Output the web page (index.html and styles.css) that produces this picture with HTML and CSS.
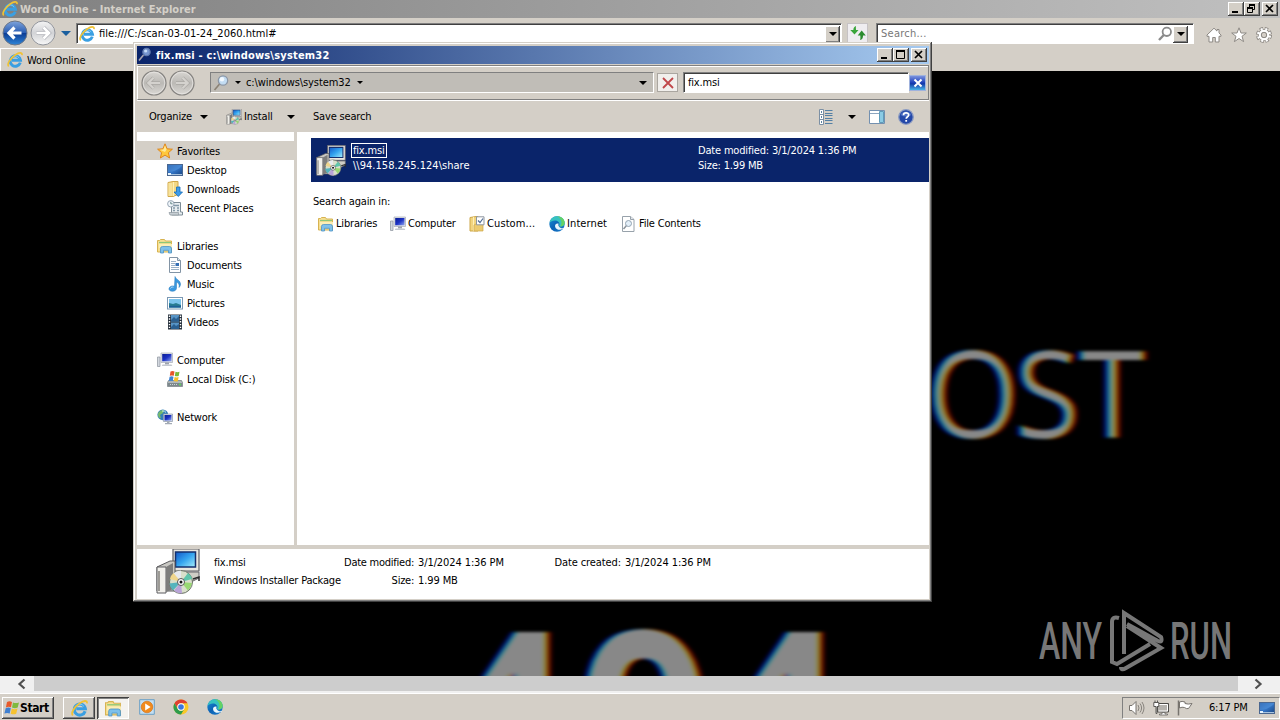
FILE: index.html
```html
<!DOCTYPE html>
<html lang="en">
<head>
	<meta charset="utf-8">
	<title>Word Online</title>
	<link rel="stylesheet" href="styles.css">
</head>
<body>
	<svg class="sprites" width="0" height="0">
		<defs>
			<linearGradient id="blue" x1="0" y1="0" x2="0" y2="1">
				<stop offset="0" stop-color="#7fa4dc"/><stop offset=".48" stop-color="#2c5fb4"/>
				<stop offset=".5" stop-color="#0b3a92"/><stop offset="1" stop-color="#2f86d8"/>
			</linearGradient>
			<linearGradient id="pale" x1="0" y1="0" x2="0" y2="1">
				<stop offset="0" stop-color="#f4f4f4"/><stop offset=".5" stop-color="#d2d3d6"/><stop offset="1" stop-color="#f8f8f8"/>
			</linearGradient>
			<linearGradient id="gray" x1="0" y1="0" x2="0" y2="1">
				<stop offset="0" stop-color="#d8d6d2"/><stop offset=".5" stop-color="#bbb9b5"/><stop offset="1" stop-color="#dad8d4"/>
			</linearGradient>
			<linearGradient id="screen" x1="0" y1="0" x2="1" y2="1">
				<stop offset="0" stop-color="#1257c8"/><stop offset=".5" stop-color="#35a5ef"/><stop offset="1" stop-color="#a8f0fb"/>
			</linearGradient>
			<linearGradient id="dark" x1="0" y1="0" x2="1" y2="1">
				<stop offset="0" stop-color="#0a1d92"/><stop offset=".5" stop-color="#1c32c4"/><stop offset="1" stop-color="#8fa5ee"/>
			</linearGradient>
			<linearGradient id="edge" x1="0" y1="0" x2="1" y2="1">
				<stop offset="0" stop-color="#1a8fd8"/><stop offset=".5" stop-color="#0c62b4"/><stop offset="1" stop-color="#1b7fd0"/>
			</linearGradient>
			<linearGradient id="desk" x1="0" y1="0" x2="1" y2="1">
				<stop offset="0" stop-color="#1c4f9c"/><stop offset=".5" stop-color="#3577c8"/><stop offset="1" stop-color="#17427f"/>
			</linearGradient>
			<!-- cleartype fringe: red slides right, blue slides left -->
			<filter id="fringe" x="-5%" y="-5%" width="110%" height="110%" color-interpolation-filters="sRGB">
				<feColorMatrix in="SourceGraphic" values="1 0 0 0 0  0 0 0 0 0  0 0 0 0 0  0 0 0 1 0" result="r0"/>
				<feOffset in="r0" dx="2.700" result="r"/>
				<feColorMatrix in="SourceGraphic" values="0 0 0 0 0  0 1 0 0 0  0 0 0 0 0  0 0 0 1 0" result="g"/>
				<feColorMatrix in="SourceGraphic" values="0 0 0 0 0  0 0 0 0 0  0 0 1 0 0  0 0 0 1 0" result="b0"/>
				<feOffset in="b0" dx="-2.700" result="b"/>
				<feBlend in="r" in2="g" mode="screen" result="rg"/>
				<feBlend in="rg" in2="b" mode="screen" result="rgb"/>
				<feGaussianBlur in="rgb" stdDeviation="2.400 1.600"/>
			</filter>
		</defs>

		<symbol id="ie" viewBox="0 0 16 16">
			<path d="M13.300 10.600A5.200 5.200 0 1 1 13.500 8.300H5" fill="none" stroke="#3a9fe2" stroke-width="2.900"/>
			<path d="M4.200 6A4.800 4.800 0 0 1 12.200 6" fill="none" stroke="#8fd2f6" stroke-width=".8"/>
			<path d="M1.800 14.400C-.6 12.400 3.400 6.200 8.200 3 11.800.6 15.400-.2 15 3.200" fill="none" stroke="#f0c235" stroke-width="1.700"/>
		</symbol>
		<symbol id="back" viewBox="0 0 26 26">
			<circle cx="13" cy="13" r="12" fill="url(#blue)" stroke="#6c7687"/>
			<path d="M19.500 13H8M12.500 7.500 7 13l5.500 5.500" fill="none" stroke="#fff" stroke-width="3.200"/>
		</symbol>
		<symbol id="forward" viewBox="0 0 26 26">
			<circle cx="13" cy="13" r="12" fill="url(#pale)" stroke="#92959c"/>
			<path d="M6.500 13H18M13.500 7.500 19 13l-5.500 5.500" fill="none" stroke="#b0b2b8" stroke-width="4"/>
			<path d="M6.500 13H18M13.500 7.500 19 13l-5.500 5.500" fill="none" stroke="#fff" stroke-width="2.600"/>
		</symbol>
		<symbol id="off-arrow" viewBox="0 0 26 26">
			<circle cx="13" cy="13" r="12" fill="url(#gray)" stroke="#858380" stroke-width="1.200"/>
			<circle cx="13" cy="13" r="10.800" fill="none" stroke="#e8e6e3" stroke-width=".8"/>
			<path d="M19 13H8M12.500 7.800 7.300 13l5.200 5.200" fill="none" stroke="#aaa8a4" stroke-width="3.400"/>
			<path d="M19 13H8M12.500 7.800 7.300 13l5.200 5.200" fill="none" stroke="#d4d2ce" stroke-width="2.200"/>
		</symbol>
		<symbol id="refresh" viewBox="0 0 16 16">
			<path d="M6 1C3.800 1.500 3.400 3.500 3.400 5H.300l4.200 4.500L8.500 5H6C5.900 3.300 5.800 2.200 6 1z" fill="#3aa53a"/>
			<path d="M10 15c2.400-.4 3.100-2.300 3-4.500h2.800L11.700 5.500 7.700 10.500h2.600c.1 1.800.3 3.200-.3 4.500z" fill="#2c8c30"/>
		</symbol>
		<symbol id="lens" viewBox="0 0 16 16">
			<circle cx="9.800" cy="5.800" r="4.200" fill="none" stroke="#8b8b8b" stroke-width="1.800"/>
			<path d="M6.800 9 2 14" stroke="#8b8b8b" stroke-width="2.400"/>
		</symbol>
		<symbol id="magnifier" viewBox="0 0 16 16">
			<path d="M7 8.500 1.500 15" stroke="#8a8174" stroke-width="1.600"/>
			<circle cx="10" cy="5.500" r="4.700" fill="#c2dcf2" stroke="#8b96a5" stroke-width="1.200"/>
			<circle cx="9" cy="4.300" r="2.200" fill="#f2f9ff"/>
		</symbol>
		<symbol id="magnifier-dark" viewBox="0 0 16 16">
			<path d="M6.500 8 2 13.500" stroke="#a8a5b0" stroke-width="1.600"/>
			<circle cx="9.500" cy="5" r="3.700" fill="#7695cf" stroke="#5f78ac" stroke-width="1.200"/>
			<circle cx="8.700" cy="4" r="1.600" fill="#c5dcf8"/>
		</symbol>
		<symbol id="home" viewBox="0 0 16 16">
			<path d="M8 1.200 1 8v1.300h2V15h3.700v-4.500h2.600V15H13V9.300h2V8l-2-2V2.500h-2v1.600z" fill="#fff" stroke="#8d8984"/>
		</symbol>
		<symbol id="star-line" viewBox="0 0 16 16">
			<path d="M8 .8l2 5.200h5.300L11 9.300l1.600 5.300L8 11.500l-4.600 3.100L5 9.300.7 6H6z" fill="#fff" stroke="#8d8984"/>
		</symbol>
		<symbol id="gear" viewBox="0 0 16 16">
			<circle cx="8" cy="8" r="6.400" fill="none" stroke="#8d8984" stroke-width="3.200" stroke-dasharray="3.300 1.727"/>
			<circle cx="8" cy="8" r="4.600" fill="none" stroke="#8d8984" stroke-width="3"/>
			<circle cx="8" cy="8" r="5.900" fill="none" stroke="#fff" stroke-width="2.400" stroke-dasharray="2 2.634" stroke-dashoffset="-.6"/>
			<circle cx="8" cy="8" r="4.200" fill="none" stroke="#fff" stroke-width="2.200"/>
			<circle cx="8" cy="8" r="2.700" fill="#d4cfc7" stroke="#8d8984"/>
		</symbol>
		<symbol id="star" viewBox="0 0 16 16">
			<path d="M8 .8l2.100 5 5.300.4-4 3.500 1.200 5.300L8 12.100 3.400 15l1.200-5.300-4-3.500L5.900 5.800z" fill="#ffc83c" stroke="#e0861c"/>
			<path d="M8 2.500 9.500 6.400 8 9 3 6.800l3.400-.3z" fill="#ffe99a"/>
		</symbol>
		<symbol id="desktop" viewBox="0 0 16 16">
			<rect x=".5" y="2.500" width="15" height="11" fill="url(#desk)" stroke="#4a6790"/>
			<path d="M1 10C6 10 11 8 15 4v-1H1z" fill="#5b9be0" opacity=".45"/>
			<path d="M1 12.500h14" stroke="#a9c4df"/><path d="M1 12h3" stroke="#e4f3ff" stroke-width="2"/>
		</symbol>
		<symbol id="downloads" viewBox="0 0 16 16">
			<path d="M1 1.500 6 .5h5v13l-5 2H1z" fill="#f3d884" stroke="#d0a648"/>
			<path d="M6.500 1v14" stroke="#fff0b8"/><path d="M1.500 2H5v13H1.500z" fill="#f7e29b"/>
			<path d="M9.500 6h3.500v5H15.500L11.300 15.500 7 11h2.500z" fill="#3e9be8" stroke="#176cb8" stroke-width=".8"/>
		</symbol>
		<symbol id="recent" viewBox="0 0 16 16">
			<path d="M3.500 5V2.500h10V12h2v3h-11V5z" fill="#e8eef1" stroke="#7d8c96"/>
			<path d="M7 5.500h5M6 8h2M10 8h2M6 10.500h2M10 10.500h2" stroke="#8399a8" stroke-width="1.400"/>
			<path d="M2 12.500h9.500v2.500H3z" fill="#c6ced3" stroke="#8e989f" stroke-width=".7"/>
			<circle cx="3.800" cy="3.800" r="3.200" fill="#eff5fa" stroke="#98a6b4"/><path d="M3.800 1.800v2h1.800" fill="none" stroke="#688"/>
		</symbol>
		<symbol id="libraries" viewBox="0 0 16 16">
			<path d="M.5 14V2.500h2l1-1h4l1 1.500h6V14z" fill="#f6df91" stroke="#d7b352"/>
			<path d="M2 4.500h12" stroke="#8cc77a" stroke-width="1.200"/><path d="M2 6h13v4H2z" fill="#fbeeb6"/>
			<path d="M3.500 15V10.500Q3.500 8.500 5.500 8.500h7Q14.500 8.500 14.500 10.500V15H11.500v-2.700H6.500V15z" fill="#7dc0ea" stroke="#4b93c7" stroke-width=".8"/>
		</symbol>
		<symbol id="documents" viewBox="0 0 16 16">
			<path d="M2.500.5h8l3 3v12h-11z" fill="#fff" stroke="#8294a5"/><path d="M10.500.5v3h3" fill="#dce7f0" stroke="#8294a5"/>
			<path d="M4 4.500h5M4 6.500h4M4 8.500h4M4 10.500h8M4 12.500h8" stroke="#9ab1c6"/><path d="M8.500 6h3.500v3H8.500z" fill="#346fb4"/>
		</symbol>
		<symbol id="music" viewBox="0 0 16 16">
			<path d="M8 .5c.5 3 5.500 3.500 5.500 7.500 0 1.500-.6 2.600-1.500 3.500.8-3-.5-4.500-2.500-5.500v6c0 2-1.800 3.300-4 3.300S1.800 14.300 2 12.500c.3-2 2.900-3.100 5.500-2.300z" fill="#3a98e0" stroke="#2176b8" stroke-width=".5"/>
			<path d="M3.500 12.500c.5-1.400 2-1.600 3-1.400" stroke="#b3defa" fill="none"/>
		</symbol>
		<symbol id="pictures" viewBox="0 0 16 16">
			<rect x=".5" y="2.500" width="15" height="11.500" fill="#fff" stroke="#7b98b3"/>
			<path d="M2 4h12v8.500H2z" fill="#7cc4ec"/><path d="M2 8l4 1 3-1 5 2v2.500H2z" fill="#297c91"/><path d="M2 10.800h12v1.700H2z" fill="#1e5f96"/>
		</symbol>
		<symbol id="videos" viewBox="0 0 16 16">
			<path d="M1 .5h14v15H1z" fill="#27313d"/><path d="M4 1h8v6.500H4zM4 8.500h8V15H4z" fill="#5794c6"/>
			<path d="M4 6 7 3l2 2 3-3v5.500H4zM4 13l3-3 2 2 3-2v5H4z" fill="#2a5f90"/>
			<path d="M2.500 1.500v14M13.500 1.500v14" stroke="#fff" stroke-width="1.400" stroke-dasharray="1.400 1.400"/>
		</symbol>
		<symbol id="computer" viewBox="0 0 16 16">
			<path d="M.5 5h2.500v9.500H.5z" fill="#d3d8df" stroke="#8c939d" stroke-width=".7"/>
			<path d="M4 1h11.500v9.500H4z" fill="#e0e3e8" stroke="#a6acb6" stroke-width=".7"/><path d="M5.200 2h9.300v7.300H5.200z" fill="url(#dark)"/>
			<path d="M8 10.500h4v2H8z" fill="#9da3ad"/><path d="M5.500 12.500h9l.8 1.500H4.800z" fill="#c3c8cf"/>
		</symbol>
		<symbol id="disk" viewBox="0 0 16 16">
			<path d="M1.500 9.500h13l1 2v4H.5v-4z" fill="#b0b7b9" stroke="#6e797c" stroke-width=".7"/><path d="M1 12h14v3H1z" fill="#7d888c"/>
			<path d="M3 13.500h7" stroke="#cbd3d5" stroke-dasharray="1 1"/><path d="M12 12.800h2v1.500h-2z" fill="#59df54"/>
			<path d="M3.500.500Q5.500-.5 7.500.500L6.800 4.800Q5 4.100 2.800 4.800z" fill="#e8562b"/><path d="M8.500.800q2 .8 4 0l-.8 4.200q-2 .7-3.900-.1z" fill="#79b938"/>
			<path d="M2.600 5.700q2-.8 3.900 0l-.7 4.300q-2-.7-4 0z" fill="#3f83d3"/><path d="M7.600 6q2 .8 4 0l-.8 4.200q-2 .7-4-.1z" fill="#f5c02b"/>
		</symbol>
		<symbol id="network" viewBox="0 0 16 16">
			<circle cx="5.800" cy="5.800" r="5.400" fill="#3480b8"/><path d="M2 3q2-2.500 5-2L6 4 3 6 4 9 2.500 9Q-.4 6 2 3z" fill="#76b96d"/><path d="M5 2q3-.5 4 1.500" stroke="#c7ebf4" fill="none"/>
			<path d="M6.500 5h9v7.500h-9z" fill="#dde2e9" stroke="#8d98aa" stroke-width=".7"/><path d="M7.500 6h7v5.500h-7z" fill="url(#dark)"/>
			<path d="M10 12.500h2.500v1.500H15v1.200H8V14h2z" fill="#a4abb5"/>
		</symbol>
		<symbol id="custom" viewBox="0 0 16 16">
			<path d="M1 1.500 7 .5h2v14.500H1z" fill="#f2d57f" stroke="#cda748"/><path d="M4.500 1v14" stroke="#fff0b9"/><path d="M9 7h5v8H5V9z" fill="#eccb70" stroke="#cda748" stroke-width=".7"/>
			<path d="M7.500.8h7.500v8H7.500z" fill="#fff" stroke="#8d959e"/><path d="M9 4.500 11 6.500l3-4" fill="none" stroke="#516c94" stroke-width="1.200"/>
		</symbol>
		<symbol id="edgeball" viewBox="0 0 16 16">
			<circle cx="8" cy="8" r="7.700" fill="url(#edge)"/>
			<path d="M.5 7C1.500 2 5 .3 8.300.3c4.300 0 7.500 3.200 7.400 6.800 0 3-3.200 4.200-5.700 3.100C11.600 7.200 9 4.600 6 4.600 3.500 4.600 1.500 5.600.5 7z" fill="#37c2c0"/>
			<path d="M8 .3c5 0 7.800 3.700 7.700 6.800 0 2.600-2.500 3.600-4.500 3.400C14 7 12 2 8 .3z" fill="#65d264"/>
			<path d="M9.800 10.200C9 9.400 9.600 8.500 9.500 7.500 7 7 5.500 9 6.200 11c.9 2.800 4.500 3.600 7.600 2 .5-.2 1 0 .6.500A9 9 0 0 0 15 12c-2 .600-4 .200-5.200-1.800z" fill="#eaf6fb"/>
		</symbol>
		<symbol id="contents" viewBox="0 0 16 16">
			<path d="M1.500.5h8l3.500 3v12H1.500z" fill="#fff" stroke="#98a2ab"/><path d="M9.500.5v3H13" fill="#e2e7ec" stroke="#98a2ab"/>
			<circle cx="7.500" cy="7.500" r="3" fill="#e3eff9" stroke="#94a4b2"/><path d="M5.300 9.800 2.500 13" stroke="#8a939b" stroke-width="1.500"/>
		</symbol>
		<symbol id="msi" viewBox="0 0 44 46">
			<path d="M17 0h26v22H17z" fill="#e9e7e0" stroke="#5d5d63" stroke-width="1.200"/>
			<path d="M19.500 3h20v15h-20z" fill="url(#screen)" stroke="#15306e" stroke-width="1.500"/>
			<path d="M15 23h28v6l-6 3H15z" fill="#cfcdc6" stroke="#66656a"/><path d="M37 30l6-2v4" stroke="#2a2a2c" fill="none" stroke-width="1.500"/>
			<path d="M1 18 14 12h5v30H1z" fill="#c9c8c3" stroke="#5a5a5c"/><path d="M1 18h9v26H1z" fill="#f1f0eb" stroke="#5c5c60"/>
			<path d="M10 18l7-4v26l-7 3z" fill="#7d7d7c"/><path d="M3 22v20" stroke="#9d9b96" stroke-width="2"/>
			<circle cx="25" cy="33" r="11.500" fill="#d9dfcb" stroke="#6c7268"/>
			<path d="M25 33 17 24.500q4-3 8-3z" fill="#e6e9ee"/><path d="M25 33 14 30q1-4 3.500-6z" fill="#efd58c"/><path d="M25 33 32 24q3 2 4 6z" fill="#5fc4ab"/>
			<path d="M25 33 36 34q-1 5-4 7.500z" fill="#98d873"/><path d="M25 33 17 41.500q-3-3-3.500-7z" fill="#55b4bd"/><path d="M25 33 26 44.500q-5 0-8-3z" fill="#b9a4d8"/>
			<circle cx="25" cy="33" r="3.500" fill="#fff" stroke="#555"/><circle cx="25" cy="33" r="1.500" fill="#111"/>
		</symbol>
		<symbol id="views" viewBox="0 0 16 16">
			<path d="M.5.5h4v15h-4zM.5 5.500h4M.5 10.500h4" fill="#fff" stroke="#7c90a4"/><path d="M2 3h1M2 8h1M2 13h1" stroke="#245a82" stroke-width="1.400"/>
			<path d="M6 1.500H13.500M6 4.500H13.500M6 6.500H13.500M6 9.500H13.500M6 11.500H13.500M6 14.500H13.500" stroke="#5380a5"/>
		</symbol>
		<symbol id="pane" viewBox="0 0 16 16">
			<path d="M.5 1.500h15v13H.5z" fill="#fff" stroke="#7390b0"/><path d="M1 4.500h9" stroke="#8ca5bf"/><path d="M10.500 2.500h4v11h-4z" fill="#8bcbe5" stroke="#5f9cba"/>
		</symbol>
		<symbol id="help" viewBox="0 0 16 16">
			<circle cx="8" cy="8" r="7.300" fill="#2448a8" stroke="#8b9bc2" stroke-width="1.300"/><path d="M2.500 6a6 6 0 0 1 11 0Q8 9 2.500 6z" fill="#6d8cd6" opacity=".6"/>
			<path d="M5.500 6.200c0-3 5.200-3 5.200-.2 0 1.800-2.500 1.700-2.500 3.800" fill="none" stroke="#fff" stroke-width="1.700"/><path d="M7.300 11h1.800v1.700H7.300z" fill="#fff"/>
		</symbol>
		<symbol id="flag4" viewBox="0 0 16 16">
			<path d="M3 2Q5.500.500 8 2L7 7.200Q4.500 6 1.900 7.400z" fill="#e75a2b"/><path d="M9 2.400q2.500 1.300 6 0l-1.300 5.200q-3 1.200-5.700-.1z" fill="#7fb93e"/>
			<path d="M1.700 8.300Q4.300 7 6.800 8.200L5.700 13.500Q3 12.300.4 13.600z" fill="#3f7fd0"/><path d="M7.800 8.500q2.500 1.300 5.700 0l-1.300 5.200q-2.700 1.200-5.500 0z" fill="#f6c22f"/>
		</symbol>
		<symbol id="player" viewBox="0 0 16 16">
			<path d="M.7.700h14.600v14.600H.700z" fill="#c4dff2" stroke="#6b9fc5"/><circle cx="8" cy="8" r="5.800" fill="#f08a1d" stroke="#d3690c" stroke-width=".6"/><path d="M6.200 4.600v6.800L11.600 8z" fill="#fff"/>
		</symbol>
		<symbol id="chrome" viewBox="0 0 16 16">
			<circle cx="8" cy="8" r="7.500" fill="#f9c828"/><path d="M1.500 4.250A7.500 7.500 0 0 1 14.500 4.250H8A3.750 3.750 0 0 0 4.750 9.900z" fill="#df4032"/>
			<path d="M1.500 4.250A7.500 7.500 0 0 0 8 15.500L11.250 9.900A3.750 3.750 0 0 1 4.750 9.900z" fill="#2d9c4c"/>
			<circle cx="8" cy="8" r="3.700" fill="#fff"/><circle cx="8" cy="8" r="2.800" fill="#3b77df"/>
		</symbol>
		<symbol id="speaker" viewBox="0 0 16 16">
			<path d="M.5 5.500H3L7 1.500v13l-4-4H.500z" fill="#fff" stroke="#77736e"/><path d="M9 5q2 3 0 6M11 3.500q3.200 4.500 0 9M13 2q4 6 0 12" fill="none" stroke="#88847e"/>
		</symbol>
		<symbol id="lan" viewBox="0 0 16 16">
			<path d="M4.500 3.500h11v8.500h-11z" fill="#b5b2ad" stroke="#4c4a47"/><path d="M5.500 4.500h9v6.500h-9" fill="none" stroke="#fff"/>
			<path d="M9 12.500h3v1.500h2.500v1H6.500v-1H9z" fill="#fff" stroke="#5a5855" stroke-width=".7"/>
			<path d="M.800 2.500h5V6.500H4v7H3V6.500H.8z" fill="#fff" stroke="#5a5855"/><path d="M2 .5v2M4.500.500v2" stroke="#5a5855"/>
		</symbol>
		<symbol id="pennant" viewBox="0 0 16 16">
			<path d="M1.500.5v15" stroke="#77736e" stroke-width="1.500"/><path d="M2.500 2Q5 .8 8 2v1.500q3 1.200 7 0Q13 6.500 11.500 8.500q-2 .7-4-1-2.500-.8-5 .5z" fill="#fff" stroke="#77736e"/>
		</symbol>
		<symbol id="wmin" viewBox="0 0 12 10"><path d="M2 8h6" stroke="#000" stroke-width="2"/></symbol>
		<symbol id="wmax" viewBox="0 0 12 10"><path d="M1.500 1.500h8v7h-8z" fill="none" stroke="#000"/><path d="M1 1h9" stroke="#000" stroke-width="2"/></symbol>
		<symbol id="wrestore" viewBox="0 0 12 10"><path d="M3.500 3V.500h5v5H7M1.500 3.500h5v5h-5z" fill="none" stroke="#000"/><path d="M3 1h6M1 4h6" stroke="#000" stroke-width="2"/></symbol>
		<symbol id="wclose" viewBox="0 0 12 10"><path d="M2 1l7 7M9 1 2 8" stroke="#000" stroke-width="1.700"/></symbol>
	</svg>

	<div class="screen">
		<header class="titlebar inactive">
			<svg class="i16"><use href="#ie"/></svg>
			<span class="title">Word Online - Internet Explorer</span>
			<div class="winbtns">
				<button><svg><use href="#wmin"/></svg></button>
				<button><svg><use href="#wrestore"/></svg></button>
				<button class="close"><svg><use href="#wclose"/></svg></button>
			</div>
		</header>

		<nav class="ie-nav">
			<div class="ie-travel">
				<svg><use href="#back"/></svg><svg><use href="#forward"/></svg>
			</div>
			<i class="drop"></i>
			<div class="field address">
				<svg class="i16"><use href="#ie"/></svg>
				<span>file:///C:/scan-03-01-24_2060.html#</span>
				<b class="combo"><i class="caret"></i></b>
			</div>
			<div class="refresh"><svg class="i16"><use href="#refresh"/></svg></div>
			<div class="field search">
				<span>Search...</span>
				<svg class="i16"><use href="#lens"/></svg>
				<b class="combo"><i class="caret"></i></b>
			</div>
			<div class="ie-tools">
				<svg class="i16"><use href="#home"/></svg>
				<svg class="i16"><use href="#star-line"/></svg>
				<svg class="i16"><use href="#gear"/></svg>
			</div>
		</nav>
		<div class="tabs">
			<div class="tab"><svg class="i16"><use href="#ie"/></svg><span>Word Online</span></div>
		</div>

		<main class="page">
			<svg width="1280" height="605">
				<g class="ghost">
					<text class="host" y="367" x="926 1014 1079">OST</text>
					<text class="code" y="733" x="435 575 708">404</text>
				</g>
				<g class="watermark">
					<text x="1039" y="588" textLength="63" lengthAdjust="spacingAndGlyphs">ANY</text>
					<text x="1170" y="588" textLength="62" lengthAdjust="spacingAndGlyphs">RUN</text>
					<path d="M1119 547Q1112 545 1112 551V591L1117 593 1150 573M1124 583V542L1161 566Q1163 572 1158 570L1127 553M1121 596Q1121 600 1126 597L1161 577 1127 555"/>
				</g>
			</svg>
		</main>
		<div class="hscroll">
			<svg width="34" height="16"><path d="M24.500 3.500 19.500 8l5 4.500" fill="none" stroke="#505050" stroke-width="2.200"/></svg>
			<div class="thumb"></div>
			<svg width="42" height="16"><path d="M17.500 3.500 22.500 8l-5 4.500" fill="none" stroke="#505050" stroke-width="2.200"/></svg>
		</div>

		<footer class="taskbar">
			<div class="raised start"><svg class="i16"><use href="#flag4"/></svg><b>Start</b></div>
			<div class="raised task"><svg><use href="#ie"/></svg></div>
			<div class="pressed task"><svg><use href="#libraries"/></svg></div>
			<div class="pins">
				<svg class="i16"><use href="#player"/></svg>
				<svg class="i16"><use href="#chrome"/></svg>
				<svg class="i16"><use href="#edgeball"/></svg>
			</div>
			<div class="tray">
				<svg class="i16"><use href="#speaker"/></svg>
				<svg class="i16"><use href="#lan"/></svg>
				<svg class="i16"><use href="#pennant"/></svg>
				<span>6:17 PM</span>
				<svg class="i16"><use href="#desktop"/></svg>
			</div>
		</footer>
	</div>

	<section class="explorer">
		<header class="titlebar">
			<svg class="i16"><use href="#magnifier-dark"/></svg>
			<span class="title">fix.msi - c:\windows\system32</span>
			<div class="winbtns">
				<button><svg><use href="#wmin"/></svg></button>
				<button><svg><use href="#wmax"/></svg></button>
				<button class="close"><svg><use href="#wclose"/></svg></button>
			</div>
		</header>
		<div class="addressband">
			<div class="travel">
				<svg><use href="#off-arrow"/></svg><svg><use href="#off-arrow"/></svg>
			</div>
			<div class="crumbs">
				<svg class="i16"><use href="#magnifier"/></svg>
				<i class="caret small"></i>
				<span>c:\windows\system32</span>
				<i class="caret small"></i>
				<i class="caret end"></i>
			</div>
			<div class="stop"><svg width="16" height="14"><path d="M3 2l10 10M13 2 3 12" stroke="#c0474a" stroke-width="1.800"/></svg></div>
			<div class="field query"><span>fix.msi</span></div>
			<div class="clear"><svg width="12" height="10"><path d="M2.500 1.500l7 7M9.500 1.500l-7 7" stroke="#fff" stroke-width="2"/></svg></div>
		</div>
		<div class="toolbar">
			<span class="organize">Organize</span><i class="caret"></i>
			<svg class="i16 msi"><use href="#msi"/></svg><span class="install">Install</span><i class="caret"></i>
			<span class="save">Save search</span>
			<div class="right">
				<svg class="i16"><use href="#views"/></svg>
				<i class="caret"></i>
				<svg class="i16"><use href="#pane"/></svg>
				<svg class="i16"><use href="#help"/></svg>
			</div>
		</div>
		<div class="body">
			<ul class="tree">
				<li class="root on"><svg class="i16"><use href="#star"/></svg><span>Favorites</span></li>
				<li><svg class="i16"><use href="#desktop"/></svg><span>Desktop</span></li>
				<li><svg class="i16"><use href="#downloads"/></svg><span>Downloads</span></li>
				<li><svg class="i16"><use href="#recent"/></svg><span>Recent Places</span></li>
				<li class="root"><svg class="i16"><use href="#libraries"/></svg><span>Libraries</span></li>
				<li><svg class="i16"><use href="#documents"/></svg><span>Documents</span></li>
				<li><svg class="i16"><use href="#music"/></svg><span>Music</span></li>
				<li><svg class="i16"><use href="#pictures"/></svg><span>Pictures</span></li>
				<li><svg class="i16"><use href="#videos"/></svg><span>Videos</span></li>
				<li class="root"><svg class="i16"><use href="#computer"/></svg><span>Computer</span></li>
				<li><svg class="i16"><use href="#disk"/></svg><span>Local Disk (C:)</span></li>
				<li class="root"><svg class="i16"><use href="#network"/></svg><span>Network</span></li>
			</ul>
			<div class="results">
				<div class="hit">
					<svg class="hit-icon"><use href="#msi"/></svg>
					<div class="hit-name"><p><span class="focus">fix.msi</span></p><p class="path">\\94.158.245.124\share</p></div>
					<div class="hit-meta"><p>Date modified: 3/1/2024 1:36 PM</p><p>Size: 1.99 MB</p></div>
				</div>
				<p class="again">Search again in:</p>
				<div class="places">
					<a><svg class="i16"><use href="#libraries"/></svg>Libraries</a>
					<a><svg class="i16"><use href="#computer"/></svg>Computer</a>
					<a class="wide"><svg class="i16"><use href="#custom"/></svg>Custom...</a>
					<a class="wide"><svg class="i16"><use href="#edgeball"/></svg>Internet</a>
					<a><svg class="i16"><use href="#contents"/></svg>File Contents</a>
				</div>
			</div>
		</div>
		<div class="details">
			<svg><use href="#msi"/></svg>
			<div class="col name"><p>fix.msi</p><p>Windows Installer Package</p></div>
			<div class="col keys"><p>Date modified:</p><p>Size:</p></div>
			<div class="col vals"><p>3/1/2024 1:36 PM</p><p>1.99 MB</p></div>
			<div class="col keys2"><p>Date created:</p></div>
			<div class="col vals"><p>3/1/2024 1:36 PM</p></div>
		</div>
	</section>
</body>
</html>
```

FILE: styles.css
```css
* {
	box-sizing: border-box;
}
html, body {
	margin: 0;
	width: 1280px;
	height: 720px;
	overflow: hidden;
	background: #000;
}
body {
	position: relative;
	font-family: "DejaVu Sans Condensed", "DejaVu Sans", sans-serif;
	font-stretch: condensed;
	font-size: 11px;
	letter-spacing: -0.18px;
	line-height: 14px;
	color: #000;
	white-space: nowrap;
}
p, ul {
	margin: 0;
	padding: 0;
	list-style: none;
}
svg {
	display: block;
	flex: none;
}
.sprites {
	position: absolute;
}
.i16 {
	width: 16px;
	height: 16px;
}
.caret {
	border: 4px solid transparent;
	border-top-color: #000;
	border-bottom: 0;
	flex: none;
}
.caret.small {
	border-width: 3px 3px 0;
}

/* shared window chrome */
.screen {
	display: flex;
	flex-direction: column;
	height: 720px;
	background: #d4cfc7;
}
.titlebar {
	display: flex;
	align-items: center;
	height: 18px;
	background: linear-gradient(90deg, #0a246a, #a6caf0);
	color: #fff;
	font-weight: bold;
	letter-spacing: 0.2px;
}
.titlebar.inactive {
	background: linear-gradient(90deg, #808080, #c0c0c0);
	color: #d4d0c8;
	padding-left: 2px;
	letter-spacing: 0;
}
.titlebar .title {
	flex: 1;
	margin-left: 3px;
	padding-top: 1px;
}
.titlebar.inactive .title {
	margin-left: 2px;
}
.winbtns {
	display: flex;
	padding-right: 2px;
}
.winbtns button {
	width: 16px;
	height: 14px;
	padding: 2px;
	border: 0;
	background: #d4cfc7;
	box-shadow: inset -1px -1px #404040, inset 1px 1px #fff, inset -2px -2px #808080;
}
.winbtns button.close {
	margin-left: 2px;
}
.winbtns svg {
	width: 12px;
	height: 10px;
}
.field {
	display: flex;
	align-items: center;
	background: #fff;
	border: 1px solid;
	border-color: #808080 #fff #fff #808080;
	box-shadow: inset 1px 1px #404040;
}
.combo {
	display: flex;
	align-items: center;
	justify-content: center;
	width: 15px;
	height: 17px;
	background: #d4cfc7;
	box-shadow: inset -1px -1px #404040, inset 1px 1px #fff, inset -2px -2px #808080;
}

/* browser */
.ie-nav {
	display: flex;
	height: 30px;
	padding-top: 5px;
}
.ie-travel {
	display: flex;
	gap: 2px;
	margin: -3px 0 0 2px;
}
.ie-travel svg {
	width: 26px;
	height: 26px;
}
.drop {
	align-self: flex-start;
	margin: 8px 5px 0 5px;
	border: 5px solid transparent;
	border-top: 5px solid #1a5f9e;
	border-bottom: 0;
}
.address {
	width: 766px;
	height: 21px;
	padding: 1px 1px 0 2px;
	gap: 4px;
	letter-spacing: 0;
}
.address span, .search span {
	flex: 1;
}
.refresh {
	width: 21px;
	height: 20px;
	margin: 0 8px 0 5px;
	padding: 1px 2px;
	background: #efedf0;
	border: 1px solid #c6c2c4;
}
.search {
	width: 318px;
	height: 21px;
	padding: 1px 5px 0 4px;
	color: #777;
	letter-spacing: 0.25px;
}
.ie-tools {
	display: flex;
	gap: 9px;
	margin: 4px 0 0 12px;
}
.tabs {
	height: 23px;
}
.tab {
	display: flex;
	align-items: center;
	gap: 4px;
	width: 134px;
	height: 23px;
	padding-left: 6px;
	border-top: 1px solid #fff;
	border-left: 1px solid #fff;
}
.tab span {
	padding-top: 1px;
}
.page {
	height: 605px;
	background: #000;
	overflow: hidden;
}
.ghost {
	fill: #888;
	filter: url(#fringe);
	font-family: "Open Sans", sans-serif;
	font-stretch: normal;
	letter-spacing: 0;
}
.ghost .host {
	font-size: 120px;
	font-weight: 400;
}
.ghost .code {
	font-size: 240px;
	font-weight: 700;
}
.watermark {
	fill: #777;
	font-family: Roboto, sans-serif;
	font-stretch: normal;
	font-weight: 500;
	font-size: 52px;
	letter-spacing: 0;
}
.watermark path {
	fill: none;
	stroke: #777;
	stroke-width: 4;
}
.hscroll {
	display: flex;
	height: 17px;
	background: #f0f0f0;
}
.thumb {
	flex: 1;
	height: 15px;
	background: #cdcdcd;
}

/* taskbar */
.taskbar {
	display: flex;
	align-items: flex-start;
	height: 27px;
	padding: 3px 0 0 2px;
	border-top: 1px solid #fff;
}
.raised {
	box-shadow: inset -1px -1px #404040, inset 1px 1px #fff, inset -2px -2px #808080;
}
.pressed {
	background: #f4f2ee;
	box-shadow: inset 1px 1px #404040, inset -1px -1px #fff, inset 2px 2px #808080;
}
.start {
	display: flex;
	align-items: center;
	width: 52px;
	height: 22px;
	padding-left: 2px;
	font-size: 12px;
	letter-spacing: -0.4px;
}
.task {
	display: grid;
	place-items: center;
	width: 32px;
	height: 22px;
	margin-left: 9px;
}
.task + .task {
	margin-left: 2px;
}
.task svg {
	width: 17px;
	height: 17px;
}
.pins {
	display: flex;
	gap: 18px;
	margin: 2px 0 0 10px;
}
.tray {
	display: flex;
	align-items: center;
	gap: 8px;
	width: 158px;
	height: 22px;
	margin-left: auto;
	padding-left: 6px;
	border: 1px solid;
	border-color: #808080 #fff #fff #808080;
}
.tray span {
	margin: 0 3px 0 8px;
}

/* explorer window, floating over the browser */
.explorer {
	position: absolute;
	left: 133px;
	top: 42px;
	width: 799px;
	height: 560px;
	padding: 4px 3px 2px 4px;
	background: #d4cfc7;
	box-shadow: inset -1px -1px #404040, inset 1px 1px #d4cfc7, inset -2px -2px #808080, inset 2px 2px #fff;
}
.addressband {
	display: flex;
	align-items: center;
	height: 35px;
	margin: 1px 0;
	padding-left: 3px;
	border: 1px solid #808080;
	border-left-color: #fff;
	box-shadow: inset 0 1px #fff, 0 1px #fff;
}
.travel {
	display: flex;
	gap: 2px;
}
.travel svg {
	width: 26px;
	height: 26px;
}
.travel svg + svg {
	transform: scaleX(-1);
}
.crumbs {
	display: flex;
	align-items: center;
	gap: 6px;
	width: 444px;
	height: 21px;
	margin-left: 15px;
	padding: 0 6px 0 2px;
	background: #c0bdb7;
	border: 1px solid;
	border-color: #808080 #fff #fff #808080;
	letter-spacing: -0.1px;
}
.crumbs span {
	margin-left: -1px;
}
.crumbs .small + .end {
	margin-left: auto;
}
.stop {
	display: grid;
	place-items: center;
	width: 21px;
	height: 19px;
	margin: 0 5px 0 3px;
	background: #f1efec;
	border: 1px solid #aaa6a0;
}
.query {
	width: 226px;
	height: 21px;
	padding: 1px 0 0 4px;
}
.clear {
	display: grid;
	place-items: center;
	width: 17px;
	height: 16px;
	background: linear-gradient(#7b92dd, #1f43bd 45%, #1238a8 55%, #46b3e6);
	border: 1px solid #9fb2dd;
}
.toolbar {
	display: flex;
	align-items: center;
	height: 31px;
	padding-left: 12px;
}
.toolbar .organize {
	width: 51px;
}
.toolbar .msi {
	margin: 0 2px 0 18px;
}
.toolbar .install {
	width: 43px;
}
.toolbar .save {
	margin-left: 18px;
}
.toolbar .right {
	display: flex;
	align-items: center;
	gap: 13px;
	margin-left: auto;
	padding-right: 15px;
}
.body {
	display: flex;
	height: 413px;
}
.tree {
	width: 160px;
	padding-top: 9px;
	background: #fff;
	border-right: 3px solid #d4cfc7;
}
.tree li {
	display: flex;
	align-items: center;
	gap: 4px;
	height: 19px;
	padding-left: 30px;
}
.tree span {
	padding-top: 2px;
}
.tree .root {
	padding-left: 20px;
}
.tree li + .root {
	margin-top: 19px;
}
.tree .on {
	background: #d4cfc7;
}
.results {
	flex: 1;
	padding: 6px 0 0 14px;
	background: #fff;
}
.hit {
	display: flex;
	height: 44px;
	padding: 5px 0 0 5px;
	background: #0a246a;
	color: #fff;
	line-height: 15px;
}
.hit-icon {
	width: 30px;
	height: 32px;
	margin-top: 2px;
}
.hit-name {
	width: 352px;
	padding-left: 7px;
}
.path {
	letter-spacing: 0.02px;
}
.focus {
	margin-left: -2px;
	padding: 0 1px;
	border: 1px solid #fff;
}
.again {
	margin: 13px 0 0 2px;
}
.places {
	display: grid;
	grid-template-columns: 72px 79px 80px 72px auto;
	margin: 7px 0 0 7px;
}
.places a {
	display: flex;
	align-items: center;
	gap: 2px;
}
.places .wide {
	letter-spacing: 0.1px;
}
.details {
	display: flex;
	height: 50px;
	margin-top: 4px;
	padding-left: 19px;
	background: #fff;
}
.details svg {
	width: 44px;
	height: 46px;
}
.col {
	padding-top: 5px;
	line-height: 18px;
}
.name {
	width: 129px;
	margin-left: 14px;
}
.keys {
	width: 71px;
	text-align: right;
	letter-spacing: -0.25px;
}
.vals {
	width: 87px;
	margin-left: 4px;
	letter-spacing: -0.1px;
}
.keys2 {
	width: 116px;
	text-align: right;
	letter-spacing: -0.1px;
}
```
